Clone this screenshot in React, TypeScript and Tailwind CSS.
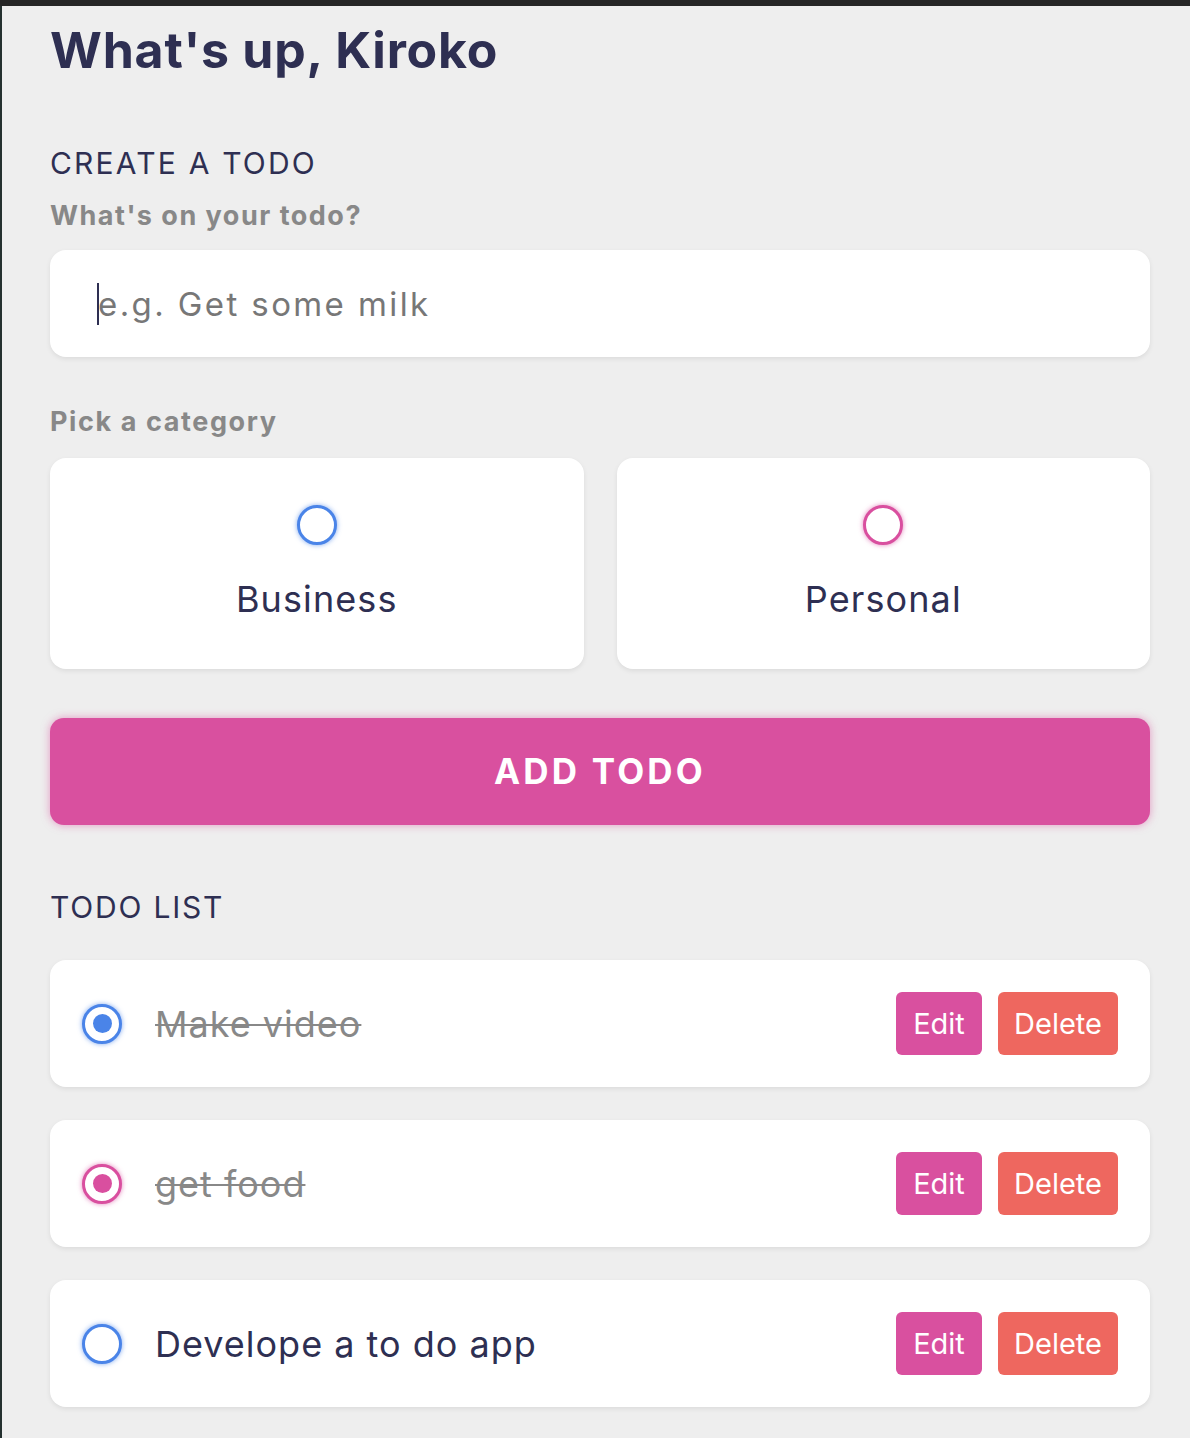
import { useState } from 'react';

type Category = 'business' | 'personal';

interface Todo {
  id: number;
  content: string;
  category: Category;
  done: boolean;
}

const initialTodos: Todo[] = [
  { id: 1, content: 'Make video', category: 'business', done: true },
  { id: 2, content: 'get food', category: 'personal', done: true },
  { id: 3, content: 'Develope a to do app', category: 'business', done: false },
];

function Bubble({ category, checked }: { category: Category; checked?: boolean }) {
  const ring =
    category === 'business'
      ? 'border-[#4a84e8] shadow-[0_0_5px_rgba(74,132,232,0.7)]'
      : 'border-[#d94f9f] shadow-[0_0_5px_rgba(217,79,159,0.7)]';
  const dot = category === 'business' ? 'bg-[#4a84e8]' : 'bg-[#d94f9f]';
  return (
    <span className={`flex h-[40px] w-[40px] shrink-0 items-center justify-center rounded-full border-[3.5px] bg-white ${ring}`}>
      {checked && <span className={`h-[19px] w-[19px] rounded-full ${dot}`} />}
    </span>
  );
}

export default function App() {
  const [todos] = useState<Todo[]>(initialTodos);

  return (
    <div className="min-h-[1438px] bg-[#eeeeee] font-['Inter',sans-serif] text-[#2e2f52]">
      <div className="h-[6px] bg-[#262626]" />
      <div className="flex min-h-[1432px]">
        <div className="w-[2px] shrink-0 bg-[#24302f]" />
        <main className="w-[1100px] pl-[48px] box-content">
          <h1 className="mt-[19px] text-[50px] font-bold leading-none tracking-[0.8px]">What's up, Kiroko</h1>

          <h2 className="mt-[73px] text-[30px] font-normal leading-none tracking-[2.2px]">CREATE A TODO</h2>
          <p className="mt-[24px] text-[27px] font-bold leading-none tracking-[1.5px] text-[#888888]">What's on your todo?</p>

          <div className="relative mt-[21px] h-[107px] rounded-[16px] bg-white shadow-[0_2px_5px_rgba(0,0,0,0.08)]">
            <input
              className="h-full w-full rounded-[16px] bg-transparent pl-[48px] text-[33px] tracking-[2.4px] text-[#2e2f52] outline-none placeholder:text-[#777777]"
              placeholder="e.g. Get some milk"
            />
            <span className="absolute left-[47px] top-[33px] h-[42px] w-[2px] bg-[#2e2f52]" />
          </div>

          <p className="mt-[51px] text-[27px] font-bold leading-none tracking-[1.6px] text-[#888888]">Pick a category</p>

          <div className="mt-[23px] grid grid-cols-2 gap-[33px]">
            <label className="flex h-[211px] flex-col items-center rounded-[16px] bg-white pt-[47px] shadow-[0_2px_5px_rgba(0,0,0,0.08)]">
              <Bubble category="business" />
              <span className="mt-[36px] text-[36px] leading-none tracking-[1.1px]">Business</span>
            </label>
            <label className="flex h-[211px] flex-col items-center rounded-[16px] bg-white pt-[47px] shadow-[0_2px_5px_rgba(0,0,0,0.08)]">
              <Bubble category="personal" />
              <span className="mt-[36px] text-[36px] leading-none tracking-[1.1px]">Personal</span>
            </label>
          </div>

          <button
            type="button"
            className="mt-[49px] flex h-[107px] w-full items-center justify-center rounded-[14px] bg-[#d9509f] text-[35px] font-bold uppercase tracking-[3.2px] text-white shadow-[0_0_8px_rgba(217,80,159,0.55)]"
          >
            Add todo
          </button>

          <h2 className="mt-[67px] text-[30px] font-normal leading-none tracking-[1.8px]">TODO LIST</h2>

          <div className="mt-[38px] flex flex-col gap-[33px]">
            {todos.map((todo) => (
              <div
                key={todo.id}
                className="flex h-[127px] items-center rounded-[16px] bg-white pl-[32px] pr-[32px] shadow-[0_2px_5px_rgba(0,0,0,0.08)]"
              >
                <Bubble category={todo.category} checked={todo.done} />
                <span
                  className={`ml-[33px] flex-1 text-[36px] leading-none tracking-[1px] ${
                    todo.done ? 'text-[#888888] line-through decoration-[2px]' : 'text-[#2e2f52]'
                  }`}
                >
                  {todo.content}
                </span>
                <div className="flex gap-[16px]">
                  <button type="button" className="h-[63px] w-[86px] rounded-[6px] bg-[#d9509f] text-[29px] text-white">
                    Edit
                  </button>
                  <button type="button" className="h-[63px] w-[120px] rounded-[6px] bg-[#ee675f] text-[29px] text-white">
                    Delete
                  </button>
                </div>
              </div>
            ))}
          </div>
        </main>
      </div>
    </div>
  );
}
